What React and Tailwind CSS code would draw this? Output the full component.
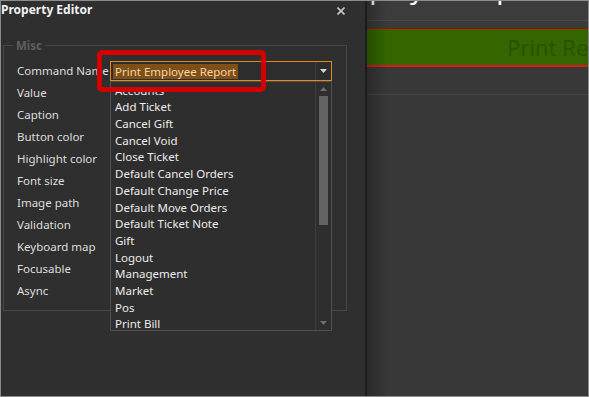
import React from "react";

/* ── DATA ─────────────────────────────────────────────────────────────── */
const labels = [
  "Command Name",
  "Value",
  "Caption",
  "Button color",
  "Highlight color",
  "Font size",
  "Image path",
  "Validation",
  "Keyboard map",
  "Focusable",
  "Async",
];

const commands = [
  "Accounts",
  "Add Ticket",
  "Cancel Gift",
  "Cancel Void",
  "Close Ticket",
  "Default Cancel Orders",
  "Default Change Price",
  "Default Move Orders",
  "Default Ticket Note",
  "Gift",
  "Logout",
  "Management",
  "Market",
  "Pos",
  "Print Bill",
];

/* ── SMALL PIECES ─────────────────────────────────────────────────────── */
const Caret = ({ up = false, color = "#d8d8d8" }) => (
  <svg width="7" height="4" viewBox="0 0 7 4">
    <path d={up ? "M0 4 L3.5 0 L7 4 Z" : "M0 0 L7 0 L3.5 4 Z"} fill={color} />
  </svg>
);

const CommandCombo = () => (
  <div className="flex h-[20px] w-[222px] items-center border border-[#e58a14] bg-[#2d2d2d]">
    <div className="flex flex-1 items-center pl-[2px]">
      <span className="bg-[#7f4f16] px-[2px] leading-[15px] text-[#f3d6a8]">
        Print Employee Report
      </span>
    </div>
    <div className="flex h-full w-[16px] items-center justify-center border-l border-[#3c3c3c]">
      <Caret />
    </div>
  </div>
);

const DropdownList = () => (
  <div className="absolute top-[80px] left-[109px] flex h-[250px] w-[222px] border border-[#505050] bg-[#2e2e2e]">
    <div className="flex-1 overflow-hidden pl-[4px]">
      {commands.map((c) => (
        <div key={c} className="flex h-[16.7px] items-center text-[#ececec]">
          {c}
        </div>
      ))}
    </div>
    <div className="flex w-[16px] flex-col items-center border-l border-[#404040]">
      <div className="flex h-[14px] items-center">
        <Caret up color="#6e6e6e" />
      </div>
      <div className="h-[129px] w-[9px] bg-[#636363]" />
      <div className="flex-1" />
      <div className="flex h-[14px] items-center">
        <Caret color="#6e6e6e" />
      </div>
    </div>
  </div>
);

/* ══════════════════════════════════════════════════════════════════════
   MAIN
   ══════════════════════════════════════════════════════════════════════ */
const App = () => {
  return (
    <div className="flex h-[397px] w-[589px] overflow-hidden border border-[#8c8c8c] font-['Noto_Sans','Open_Sans',sans-serif] text-[11.5px]">
      {/* ── PROPERTY EDITOR ───────────────────────────────────────────── */}
      <div className="relative flex w-[364px] shrink-0 flex-col bg-[#2f2f2f]">
        <div className="flex h-[17px] items-center justify-between pr-[20px]">
          <span className="text-[12px] font-bold text-[#f2f2f2]">
            Property Editor
          </span>
          <svg width="8" height="8" viewBox="0 0 8 8" className="mt-[2px]">
            <path
              d="M0.5 0.5 L7.5 7.5 M7.5 0.5 L0.5 7.5"
              stroke="#c8c8c8"
              strokeWidth="1.6"
            />
          </svg>
        </div>

        <div className="relative mt-[27px] ml-[2px] h-[266px] w-[344px] border border-[#474747] pt-[14px] pl-[13px]">
          <span className="absolute -top-[9px] left-[9px] bg-[#2f2f2f] px-[3px] font-bold text-[#5e5e5e]">
            Misc
          </span>
          {labels.map((l, i) => (
            <div key={l} className="flex h-[22px] items-center">
              <span className="w-[93px] shrink-0 text-[#dedede]">{l}</span>
              {i === 0 && <CommandCombo />}
            </div>
          ))}
        </div>

        <DropdownList />

        {/* annotation box */}
        <div className="absolute top-[49px] left-[96px] h-[42px] w-[169px] rounded-[5px] border-[5px] border-[#d40000]" />
      </div>

      <div className="w-[2px] shrink-0 bg-[#1c1c1c]" />

      {/* ── TICKET AREA ───────────────────────────────────────────────── */}
      <div className="relative flex flex-1 flex-col bg-[#383838]">
        <div className="h-[19px] overflow-hidden bg-[#3c3c3c]">
          <div className="mt-[-28px] ml-[-110px] text-[28px] leading-[28px] whitespace-nowrap text-white">
            Print Employee Report
          </div>
        </div>
        <div className="h-px bg-[#4b4b4b]" />
        <div className="h-[7px] bg-[#3a3a3a]" />
        <div className="h-px bg-[#b80000]" />
        <div className="flex h-[36px] items-center overflow-hidden bg-[#336600] pl-[140px]">
          <span className="text-[22px] whitespace-nowrap text-[#2a5200]">
            Print Report
          </span>
        </div>
        <div className="h-[2px] bg-[#e01818]" />
        <div className="h-[27px]" />
        <div className="h-px bg-[#464646]" />
        <div className="flex-1" />
        <div className="pointer-events-none absolute inset-y-0 left-0 w-[20px] bg-gradient-to-r from-black/25 to-transparent" />
      </div>
    </div>
  );
};

export default App;
